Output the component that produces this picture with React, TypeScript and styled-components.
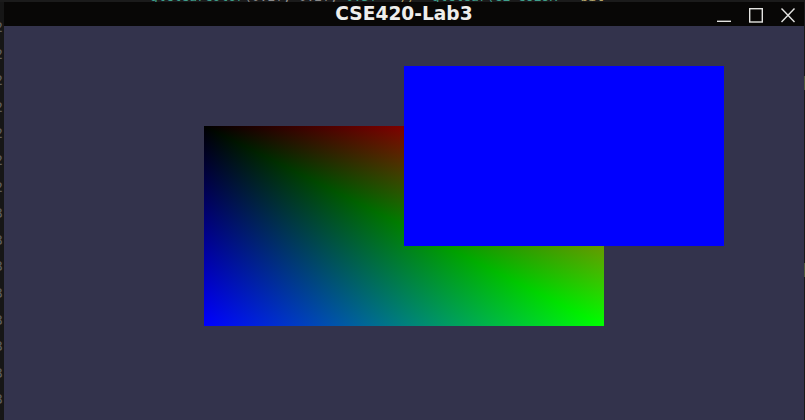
import * as React from 'react';
import styled, { createGlobalStyle } from 'styled-components';

const GlobalStyle = createGlobalStyle`
  html, body {
    margin: 0;
    padding: 0;
    background: #161616;
    overflow: hidden;
  }
`;

const Screen = styled.div`
  display: grid;
  grid-template-columns: 4px 800px 1px;
  grid-template-rows: 2px 418px;
  grid-template-areas:
    'strip strip strip'
    'gutter window edge';
  width: 805px;
  height: 420px;
  overflow: hidden;
`;

// editor text peeking out from behind the window
const EditorStrip = styled.div`
  grid-area: strip;
  overflow: hidden;
  background: #1b1b1b;
  font-family: 'DejaVu Sans Mono', monospace;
  font-size: 13px;
  line-height: 14px;
  white-space: pre;
`;

const EditorLine = styled.div`
  margin-top: -10px;
  padding-left: 150px;
`;

const Tok = styled.span<{ $c: string }>`
  color: ${({ $c }) => $c};
`;

const Gutter = styled.div`
  grid-area: gutter;
  overflow: hidden;
  background: #161616;
  font-family: 'DejaVu Sans Mono', monospace;
  font-size: 14px;
  line-height: 26.6px;
  color: #5e5e5e;
`;

const GutterNumbers = styled.div`
  width: 20px;
  margin-left: -17px;
  margin-top: 12px;
  text-align: right;
`;

const Edge = styled.div`
  grid-area: edge;
  background: linear-gradient(
    to bottom,
    #1a1a1a 0px,
    #1a1a1a 74px,
    #4d5a3a 74px,
    #4d5a3a 88px,
    #1a1a1a 88px,
    #1a1a1a 261px,
    #4d5a3a 261px,
    #4d5a3a 275px,
    #1a1a1a 275px
  );
`;

const Window = styled.div`
  grid-area: window;
  display: flex;
  flex-direction: column;
`;

const TitleBar = styled.div`
  height: 24px;
  display: grid;
  grid-template-columns: 1fr auto 1fr;
  align-items: center;
  background: #080706;
`;

const Title = styled.div`
  grid-column: 2;
  font-family: 'DejaVu Sans', sans-serif;
  font-weight: bold;
  font-size: 18.6px;
  line-height: 24px;
  color: #eeeeec;
`;

const Controls = styled.div`
  grid-column: 3;
  justify-self: end;
  display: flex;
  gap: 18px;
  padding-right: 9px;
  padding-top: 2px;
`;

const ControlIcon = styled.svg`
  display: block;
  width: 14px;
  height: 15px;
  stroke: #e4e4e2;
  stroke-width: 1.4;
  fill: none;
`;

const Viewport = styled.div`
  flex: 1;
  background: #33334c;
`;

const Scene = styled.svg`
  display: block;
`;

const Layer = styled.g`
  isolation: isolate;
`;

const Screened = styled.rect`
  mix-blend-mode: screen;
`;

const gutterNumbers = ['2', '2', '2', '2', '2', '2', '2', '3', '3', '3', '3', '3', '3', '3', '3'];

function Minimize() {
  return (
    <ControlIcon viewBox="0 0 14 15">
      <line x1="0" y1="13.3" x2="14" y2="13.3" />
    </ControlIcon>
  );
}

function Maximize() {
  return (
    <ControlIcon viewBox="0 0 14 15">
      <rect x="0.7" y="0.7" width="12.6" height="13.3" />
    </ControlIcon>
  );
}

function Close() {
  return (
    <ControlIcon viewBox="0 0 14 15">
      <line x1="0.5" y1="0.5" x2="13.5" y2="14" />
      <line x1="13.5" y1="0.5" x2="0.5" y2="14" />
    </ControlIcon>
  );
}

// quad with per-vertex colours: TL black, TR red, BR green, BL blue,
// split along the TL-BR diagonal, each channel is one linear gradient
function ColourQuad() {
  return (
    <g transform="translate(200 100)">
      <defs>
        <linearGradient id="lowBlue" gradientUnits="userSpaceOnUse" x1="80" y1="40" x2="0" y2="200">
          <stop offset="0" stopColor="#000000" />
          <stop offset="1" stopColor="#0000ff" />
        </linearGradient>
        <linearGradient id="lowGreen" gradientUnits="userSpaceOnUse" x1="0" y1="0" x2="400" y2="0">
          <stop offset="0" stopColor="#000000" />
          <stop offset="1" stopColor="#00ff00" />
        </linearGradient>
        <linearGradient id="upRed" gradientUnits="userSpaceOnUse" x1="320" y1="160" x2="400" y2="0">
          <stop offset="0" stopColor="#000000" />
          <stop offset="1" stopColor="#ff0000" />
        </linearGradient>
        <linearGradient id="upGreen" gradientUnits="userSpaceOnUse" x1="0" y1="0" x2="0" y2="200">
          <stop offset="0" stopColor="#000000" />
          <stop offset="1" stopColor="#00ff00" />
        </linearGradient>
        <clipPath id="upperTri">
          <polygon points="0,0 400,0 400,200" />
        </clipPath>
      </defs>
      <Layer>
        <rect width="400" height="200" fill="#000" />
        <Screened width="400" height="200" fill="url(#lowBlue)" />
        <Screened width="400" height="200" fill="url(#lowGreen)" />
      </Layer>
      <g clipPath="url(#upperTri)">
        <Layer>
          <rect width="400" height="200" fill="#000" />
          <Screened width="400" height="200" fill="url(#upRed)" />
          <Screened width="400" height="200" fill="url(#upGreen)" />
        </Layer>
      </g>
    </g>
  );
}

export default function App() {
  return (
    <>
      <GlobalStyle />
      <Screen>
        <EditorStrip>
          <EditorLine>
            <Tok $c="#3fa08c">{'glClearColor'}</Tok>
            <Tok $c="#8a8a8a">{'(0.2f, 0.2f, '}</Tok>
            <Tok $c="#3fa08c">{'0.3f'}</Tok>
            <Tok $c="#8a8a8a">{'   '}</Tok>
            <Tok $c="#b5a56a">{'//'}</Tok>
            <Tok $c="#8a8a8a">{'  '}</Tok>
            <Tok $c="#3fa08c">{'glClear(GL_COLOR'}</Tok>
            <Tok $c="#8a8a8a">{'   '}</Tok>
            <Tok $c="#b5a56a">{'bit'}</Tok>
          </EditorLine>
        </EditorStrip>
        <Gutter>
          <GutterNumbers>
            {gutterNumbers.map((n, i) => (
              <div key={i}>{n}</div>
            ))}
          </GutterNumbers>
        </Gutter>
        <Window>
          <TitleBar>
            <Title>CSE420-Lab3</Title>
            <Controls>
              <Minimize />
              <Maximize />
              <Close />
            </Controls>
          </TitleBar>
          <Viewport>
            <Scene width="800" height="394" viewBox="0 0 800 394">
              <ColourQuad />
              <rect x="400" y="40" width="320" height="180" fill="#0000ff" shapeRendering="crispEdges" />
            </Scene>
          </Viewport>
        </Window>
        <Edge />
      </Screen>
    </>
  );
}
